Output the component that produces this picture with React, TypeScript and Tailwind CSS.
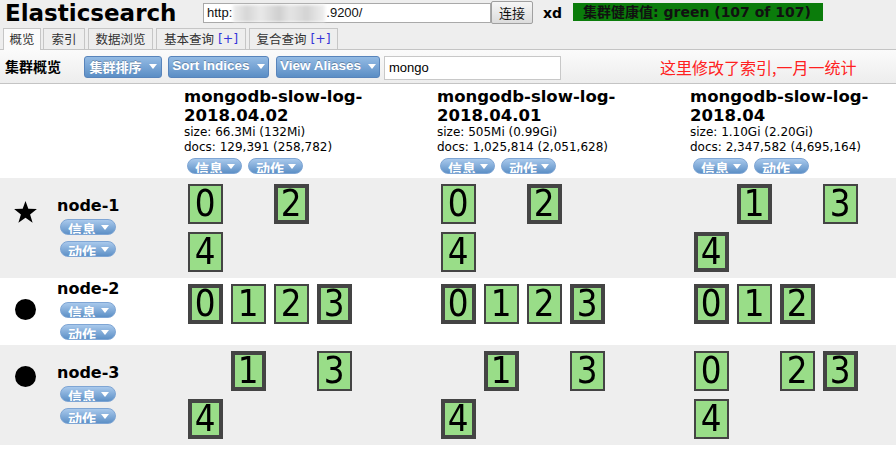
import React from "react";

type Shard = null | "p" | "r";

interface IndexInfo {
  name: string;
  date: string;
  size: string;
  docs: string;
}

interface NodeInfo {
  name: string;
  master: boolean;
  bg: string;
  shards: Shard[][];
}

const sans = "font-['DejaVu_Sans','Noto_Sans_CJK_SC',sans-serif]";

const indices: IndexInfo[] = [
  { name: "mongodb-slow-log-", date: "2018.04.02", size: "size: 66.3Mi (132Mi)", docs: "docs: 129,391 (258,782)" },
  { name: "mongodb-slow-log-", date: "2018.04.01", size: "size: 505Mi (0.99Gi)", docs: "docs: 1,025,814 (2,051,628)" },
  { name: "mongodb-slow-log-", date: "2018.04", size: "size: 1.10Gi (2.20Gi)", docs: "docs: 2,347,582 (4,695,164)" },
];

const nodes: NodeInfo[] = [
  {
    name: "node-1",
    master: true,
    bg: "bg-[#eeeeee]",
    shards: [
      ["r", null, "p", null, "r"],
      ["r", null, "p", null, "r"],
      [null, "p", null, "r", "p"],
    ],
  },
  {
    name: "node-2",
    master: false,
    bg: "bg-white",
    shards: [
      ["p", "r", "r", "p"],
      ["p", "r", "r", "p"],
      ["p", "r", "p"],
    ],
  },
  {
    name: "node-3",
    master: false,
    bg: "bg-[#eeeeee]",
    shards: [
      [null, "p", null, "r", "p"],
      [null, "p", null, "r", "p"],
      ["r", null, "r", "p", "r"],
    ],
  },
];

const tabs = [
  { label: "概览", plus: false, w: "w-[38px]", active: true },
  { label: "索引", plus: false, w: "w-[42px]", active: false },
  { label: "数据浏览", plus: false, w: "w-[65px]", active: false },
  { label: "基本查询", plus: true, w: "w-[90px]", active: false },
  { label: "复合查询", plus: true, w: "w-[89px]", active: false },
];

const Caret = () => (
  <svg width="8" height="5" viewBox="0 0 8 5" className="shrink-0">
    <polygon points="0,0 8,0 4,5" fill="#ffffff" />
  </svg>
);

const Pill = ({ label, w }: { label: string; w: string }) => (
  <span
    className={`flex h-[16px] ${w} items-start overflow-hidden rounded-full border border-[#7ea5d4] bg-gradient-to-b from-[#a9c9ec] to-[#5d90c6] pl-[7px] pr-[6px]`}
  >
    <span className="pt-[1px] font-['Noto_Sans_CJK_SC',sans-serif] text-[14px] leading-[16px] font-bold text-white">{label}</span>
    <span className="ml-auto mt-[5px]">
      <Caret />
    </span>
  </span>
);

const ToolButton = ({ label, w, cjk }: { label: string; w: string; cjk?: boolean }) => (
  <button
    className={`flex h-[22px] ${w} items-center justify-center gap-[7px] rounded-[3px] border border-[#5884bb] bg-gradient-to-b from-[#94bbe4] to-[#5b8ec5] text-white font-bold [text-shadow:0_-1px_0_rgba(0,0,0,0.25)] ${
      cjk ? "text-[13px] font-['Noto_Sans_CJK_SC',sans-serif]" : "text-[13.5px] font-['Liberation_Sans',sans-serif]"
    }`}
  >
    <span>{label}</span>
    <Caret />
  </button>
);

const Star = () => (
  <svg width="23" height="22" viewBox="0 0 22 21">
    <polygon points="11,0 13.7,7.5 21.9,7.7 15.4,12.8 17.8,20.8 11,16 4.2,20.8 6.6,12.8 0.1,7.7 8.3,7.5" fill="#000" />
  </svg>
);

const ShardBox = ({ n, kind }: { n: number; kind: Shard }) => {
  if (!kind) return <div className="h-[48px] w-[43px]" />;
  return (
    <div className="flex h-[48px] w-[43px] items-start justify-center pt-[4px]">
      <div
        className={`box-border flex h-[40px] w-[35px] items-center justify-center border-[#444444] bg-[#99dd88] font-['DejaVu_Sans',sans-serif] text-[38px] leading-none text-black ${
          kind === "p" ? "border-[4px]" : "border-[2px]"
        }`}
      >
        <span className="-mt-[3px] inline-block scale-x-[0.86]">{n}</span>
      </div>
    </div>
  );
};

export default function App() {
  return (
    <div className={`h-[455px] w-[896px] overflow-hidden bg-white text-black ${sans}`}>
      {/* top bar */}
      <div className="bg-[#eeeeee]">
        <div className="flex h-[28px] items-start">
          <h1 className="w-[203px] pl-[5px] text-[23px] leading-[26px] font-bold">Elasticsearch</h1>
          <div className="mt-[3px] flex h-[20px] w-[288px] items-center border border-[#a9a9a9] bg-white pl-[3px] font-['Liberation_Sans',sans-serif] text-[13px] text-[#111]">
            <span>http:</span>
            <span className="mx-[1px] inline-block h-[17px] w-[92px] bg-[linear-gradient(90deg,#eeeeee,#d6d6d6_15%,#e9e9e9_30%,#cfcfcf_50%,#e4e4e4_62%,#d3d3d3_80%,#f0f0f0)] blur-[1.5px]" />
            <span>.9200/</span>
          </div>
          <button className="mt-[1px] h-[23px] w-[42px] rounded-[2px] border border-[#a0a0a0] bg-gradient-to-b from-[#f6f6f6] to-[#dcdcdc] font-['Noto_Sans_CJK_SC',sans-serif] text-[13px] leading-none text-[#111]">
            连接
          </button>
          <span className="ml-[10px] w-[30px] pt-[4px] text-[14px] leading-[18px] font-bold">xd</span>
          <div className="mt-[3px] flex h-[18px] w-[250px] items-center bg-[#0b7c0b] pl-[10px] text-[14px] font-bold text-[#111]">
            集群健康值: green (107 of 107)
          </div>
        </div>
        {/* tabs */}
        <div className="relative z-10 flex h-[21px] items-end gap-[2px] pl-[3px]">
          {tabs.map((t, i) => (
            <div
              key={t.label}
              className={`flex ${t.w} items-center justify-center border border-b-0 border-[#c6c6c6] text-[12.5px] text-[#333] ${
                t.active ? "-mb-[1px] h-[22px] bg-[#fbfbfb]" : "h-[21px] bg-[#eeeeee]"
              } ${i >= 2 ? "ml-[1px]" : ""}`}
            >
              <span className="font-['Noto_Sans_CJK_SC',sans-serif]">{t.label}</span>
              {t.plus && <span className="ml-[4px] text-[#3535d8]">[+]</span>}
            </div>
          ))}
        </div>
      </div>

      {/* toolbar */}
      <div className="flex h-[35px] items-center border-y border-[#c4c4c4] bg-gradient-to-b from-[#fbfbfb] to-[#ededed] pl-[5px]">
        <span className="w-[79px] font-['Noto_Sans_CJK_SC',sans-serif] text-[14px] font-bold">集群概览</span>
        <ToolButton label="集群排序" w="w-[78px]" cjk />
        <span className="ml-[6px]">
          <ToolButton label="Sort Indices" w="w-[101px]" />
        </span>
        <span className="ml-[7px]">
          <ToolButton label="View Aliases" w="w-[104px]" />
        </span>
        <div className="ml-[4px] mt-[3px] flex h-[24px] w-[177px] items-center border border-[#c8c8c8] bg-white pl-[4px] font-['Liberation_Sans',sans-serif] text-[13px]">
          mongo
        </div>
        <span className="ml-[99px] mt-[1px] font-['Noto_Sans_CJK_SC',sans-serif] text-[16px] text-[#ff2020]">
          这里修改了索引,一月一统计
        </span>
      </div>

      {/* index headers */}
      <div className="flex h-[94px] bg-white">
        <div className="w-[184px] shrink-0" />
        {indices.map((ix) => (
          <div key={ix.date} className="w-[253px] shrink-0 pt-[3px]">
            <div className="text-[16.5px] leading-[19px] font-bold">
              {ix.name}
              <br />
              {ix.date}
            </div>
            <div className="text-[12px] leading-[15px]">{ix.size}</div>
            <div className="text-[12px] leading-[15px]">{ix.docs}</div>
            <div className="mt-[3px] flex gap-[6px] pl-[3px]">
              <Pill label="信息" w="w-[55px]" />
              <Pill label="动作" w="w-[55px]" />
            </div>
          </div>
        ))}
      </div>

      {/* node rows */}
      {nodes.map((node) => (
        <div key={node.name} className={`flex ${node.bg}`}>
          <div className="w-[50px] shrink-0 pl-[14px]">
            {node.master ? (
              <div className="mt-[23px]">
                <Star />
              </div>
            ) : (
              <div className="ml-[1px] mt-[21px] h-[21px] w-[21px] rounded-full bg-black" />
            )}
          </div>
          <div className="flex w-[134px] shrink-0 flex-col justify-center pl-[7px]">
            <div className="flex flex-col pb-[5px]">
              <span className="text-[16px] leading-[22px] font-bold">{node.name}</span>
              <span className="mt-[2px] pl-[3px]">
                <Pill label="信息" w="w-[56px]" />
              </span>
              <span className="mt-[6px] pl-[3px]">
                <Pill label="动作" w="w-[56px]" />
              </span>
            </div>
          </div>
          {node.shards.map((col, ci) => (
            <div key={ci} className="w-[253px] shrink-0 py-[2px]">
              <div className="grid grid-cols-[repeat(4,43px)]">
                {col.map((kind, n) => (
                  <ShardBox key={n} n={n} kind={kind} />
                ))}
              </div>
            </div>
          ))}
        </div>
      ))}
    </div>
  );
}
